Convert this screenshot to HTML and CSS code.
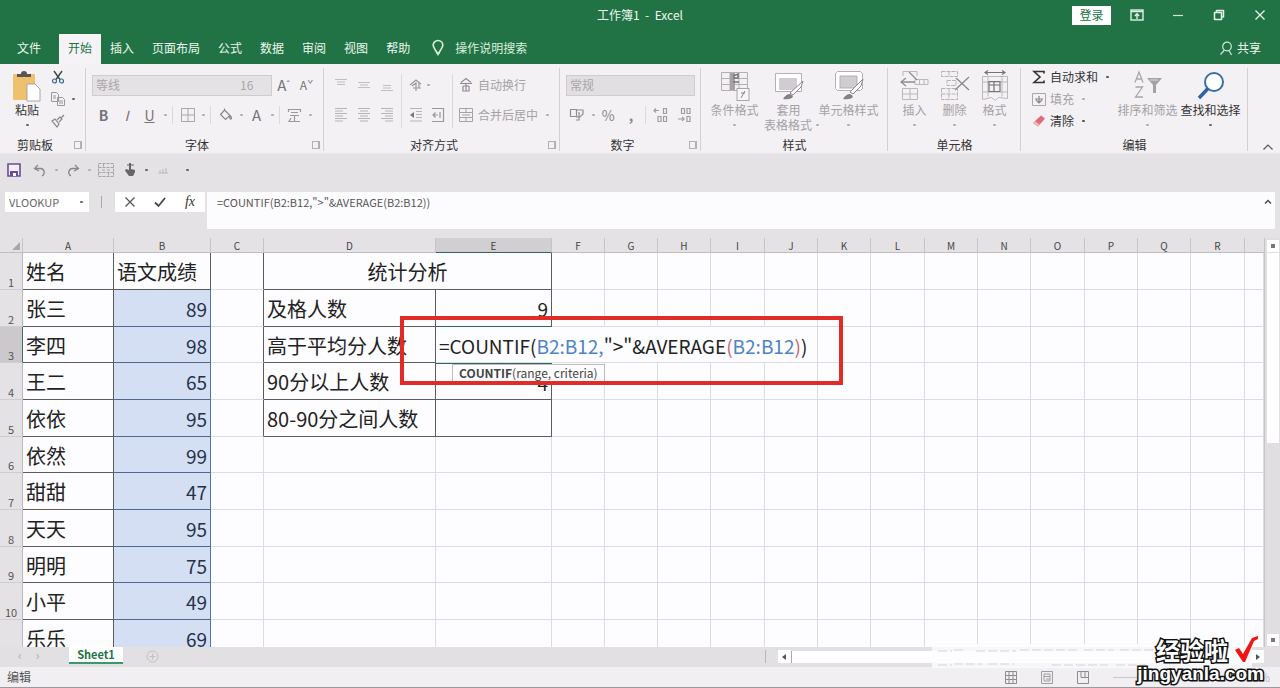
FILE: index.html
```html
<!DOCTYPE html>
<html lang="zh-CN">
<head>
<meta charset="utf-8">
<title>工作簿1 - Excel</title>
<link rel="stylesheet" href="styles.css">
</head>
<body>
<div class="app">
  <header class="top">
    <div class="titlebar">
      <h1 class="title">工作簿1&nbsp; -&nbsp; Excel</h1>
      <div class="window-controls">
        <button class="login">登录</button>
        <button class="win" aria-label="功能区显示选项"><svg width="14" height="12" viewBox="0 0 14 12"><rect x="1" y="1" width="12" height="10" fill="none" stroke="#dff0e4" stroke-width="1.4"/><path d="M1 2.5h12M7 10V5M4.800 7L7 4.800L9.200 7" fill="none" stroke="#dff0e4" stroke-width="1.400"/></svg></button>
        <button class="win" aria-label="最小化"><svg width="12" height="12" viewBox="0 0 12 12"><path d="M1 6.500h10" stroke="#cfe6d6" stroke-width="1.200"/></svg></button>
        <button class="win" aria-label="还原"><svg width="12" height="12" viewBox="0 0 12 12"><path d="M3.500 3.500V1.500h7v6.500h-2M1.500 3.500h7v7h-7z" fill="none" stroke="#e4f3e8" stroke-width="1.500" stroke-linejoin="round"/></svg></button>
        <button class="win" aria-label="关闭"><svg width="12" height="12" viewBox="0 0 12 12"><path d="M1.500 1.500l9 9M10.500 1.500l-9 9" stroke="#eef7f0" stroke-width="1.300"/></svg></button>
      </div>
    </div>
    <nav class="tabs">
      <button class="tab file">文件</button>
      <button class="tab active">开始</button>
      <button class="tab">插入</button>
      <button class="tab">页面布局</button>
      <button class="tab">公式</button>
      <button class="tab">数据</button>
      <button class="tab">审阅</button>
      <button class="tab">视图</button>
      <button class="tab">帮助</button>
      <button class="tell"><svg width="14" height="18" viewBox="0 0 14 18"><path d="M7 1.500a4.800 4.800 0 0 1 4.800 4.800c0 2-1.600 3.700-2.500 5.200L7 15.500l-2.300-4C3.800 10 2.200 8.300 2.200 6.300A4.800 4.800 0 0 1 7 1.500z" fill="none" stroke="#dcefdf" stroke-width="1.600"/><path d="M5.500 14h3" stroke="#dcefdf" stroke-width="1.500"/></svg>操作说明搜索</button>
      <button class="share"><svg width="14" height="15" viewBox="0 0 14 15"><circle cx="8" cy="5.500" r="4.300" fill="none" stroke="#cfe6d6" stroke-width="1.200"/><path d="M5.500 9L1.500 13.500M10 9.500l2.500 4.500" stroke="#cfe6d6" stroke-width="1.200"/></svg>共享</button>
    </nav>
  </header>

  <section class="ribbon">
    <div class="group g-clip">
      <div class="body">
        <button class="big paste">
          <svg width="30" height="32" viewBox="0 0 30 32"><rect x="1" y="4" width="22" height="26" rx="1" fill="#efc06e"/><path d="M5 7V4h4a3 3 0 0 1 6 0h4v3z" fill="#5b5552"/><path d="M15 14h8l5 5v12H15z" fill="#fff" stroke="#aaa5a5"/></svg>
          <span>粘贴</span><i class="dot"></i>
        </button>
        <div class="stack">
          <button class="ico" aria-label="剪切"><svg width="14" height="14" viewBox="0 0 14 14"><path d="M3 1l6 8.500M11 1L5 9.500" stroke="#444" stroke-width="1.400"/><circle cx="3.500" cy="11" r="2" fill="none" stroke="#356a94" stroke-width="1.200"/><circle cx="10.500" cy="11" r="2" fill="none" stroke="#356a94" stroke-width="1.200"/></svg></button>
          <button class="ico copy" aria-label="复制"><svg width="16" height="16" viewBox="0 0 16 16"><path d="M1.500 1.500h5l2 2v7h-7zM7.500 6.500h5l2 2v6h-7zM3 5h3M3 7h3M9 10h4M9 12h4" fill="none" stroke="#9b979b"/></svg><i class="dot"></i></button>
          <button class="ico" aria-label="格式刷"><svg width="14" height="14" viewBox="0 0 14 14"><path d="M1 7l3-2 4 5-2 3zM6 6l3-3 2 2-3 3M10 4l3-3" fill="none" stroke="#8b878b" stroke-width="1.200"/></svg></button>
        </div>
      </div>
      <div class="caption"><span>剪贴板</span><button class="launch" aria-label="剪贴板选项"></button></div>
    </div>

    <div class="group g-font">
      <div class="body col">
        <div class="row">
          <div class="combo"><select class="face" aria-label="字体" disabled><option>等线</option></select><select class="size" aria-label="字号" disabled><option>16</option></select></div>
          <button class="ico w23 letter" aria-label="增大字号">A<sup>ˆ</sup></button>
          <button class="ico w23 letter small" aria-label="减小字号">A<sup>ˇ</sup></button>
        </div>
        <div class="row marks">
          <button class="ico w23"><b>B</b></button>
          <button class="ico w23"><em>I</em></button>
          <button class="ico w23"><u>U</u></button><i class="dot"></i>
          <i class="sep"></i>
          <button class="ico w23" aria-label="边框"><svg width="16" height="16" viewBox="0 0 16 16"><path d="M1.500 1.500h13v13h-13zM8 1.500v13M1.500 8h13" fill="none" stroke="#aaa6aa"/></svg></button><i class="dot"></i>
          <i class="sep"></i>
          <button class="ico w23" aria-label="填充颜色"><svg width="14" height="14" viewBox="0 0 14 14"><path d="M5.500 2l5.500 5.500-4.500 4-5-5zM5.500 2V.5M11 7.500c1.500 1.500 2 3 1 3.500s-1.500-1-1-3.500" fill="none" stroke="#8b878b" stroke-width="1.200"/></svg></button><i class="dot"></i>
          <button class="ico w23 letter" aria-label="字体颜色">A</button><i class="dot"></i>
          <i class="sep"></i>
          <button class="ico w23" aria-label="拼音指南"><svg width="15" height="15" viewBox="0 0 15 15"><path d="M1.500 4V1.500h12V4M4 4.500h7M3 7.500h9M7.500 7.500V13M4 10l-2 3.500h11" fill="none" stroke="#9b979b" stroke-width="1.200"/></svg></button><i class="dot"></i>
        </div>
      </div>
      <div class="caption"><span>字体</span><button class="launch" aria-label="字体选项"></button></div>
    </div>

    <div class="group g-align">
      <div class="body">
        <div class="pad3">
          <button class="ico" aria-label="顶端对齐"><svg width="14" height="14" viewBox="0 0 14 14"><path d="M1 1.500h12M3 4h8M3 6.500h8" stroke="#c2bec2" stroke-width="1.200"/></svg></button>
          <button class="ico" aria-label="垂直居中"><svg width="14" height="14" viewBox="0 0 14 14"><path d="M1 4.500h12M3 7h8M1 9.500h12" stroke="#c2bec2" stroke-width="1.200"/></svg></button>
          <button class="ico" aria-label="底端对齐"><svg width="14" height="14" viewBox="0 0 14 14"><path d="M3 7.500h8M3 10h8M1 12.500h12" stroke="#c2bec2" stroke-width="1.200"/></svg></button>
          <button class="ico" aria-label="左对齐"><svg width="14" height="16" viewBox="0 0 14 16"><path d="M1 1.500h12M1 4h8M1 6.500h12M1 9h8M1 11.500h12M1 14h8" stroke="#b7b3b7" stroke-width="1.200"/></svg></button>
          <button class="ico" aria-label="居中"><svg width="14" height="16" viewBox="0 0 14 16"><path d="M1 1.500h12M3 4h8M1 6.500h12M3 9h8M1 11.500h12M3 14h8" stroke="#b7b3b7" stroke-width="1.200"/></svg></button>
          <button class="ico" aria-label="右对齐"><svg width="14" height="16" viewBox="0 0 14 16"><path d="M1 1.500h12M5 4h8M1 6.500h12M5 9h8M1 11.500h12M5 14h8" stroke="#b7b3b7" stroke-width="1.200"/></svg></button>
        </div>
        <i class="sep tall"></i>
        <div class="pad2">
          <button class="ico" aria-label="方向"><svg width="14" height="14" viewBox="0 0 14 14"><path d="M1 7l6-5 5 4M3 8l4-3v8M10 4v6M4 10h8" fill="none" stroke="#9b979b" stroke-width="1.200"/></svg></button><i class="dot"></i>
          <button class="ico" aria-label="减少缩进量"><svg width="14" height="16" viewBox="0 0 14 16"><path d="M1 1.500h12M7 4.500h6M7 7.500h6M7 10.500h6M1 14h12" stroke="#b7b3b7" stroke-width="1.200"/><path d="M5 5v6L1 8z" fill="#777"/></svg></button>
          <button class="ico" aria-label="增加缩进量"><svg width="14" height="16" viewBox="0 0 14 16"><path d="M1 1.500h11.500v13H1M7 8h-5M4.500 5.500L2 8l2.500 2.500M9 5v6" fill="none" stroke="#9b979b" stroke-width="1.200"/></svg></button>
        </div>
        <i class="sep tall"></i>
        <div class="texts">
          <button class="txt off"><svg width="16" height="16" viewBox="0 0 16 16"><path d="M3 5.500L8 1.500l5 4M2 6.500h12M5 9h6M8 6.500V14M5 9v5h6V9" fill="none" stroke="#918d91" stroke-width="1.200"/></svg>自动换行</button>
          <button class="txt off"><svg width="16" height="16" viewBox="0 0 16 16"><path d="M1.500 1.500h13v4h-13zM1.500 10.500h13v4h-13zM1.500 5.500v5M14.500 5.500v5M8 1.500v4M8 10.500v4M4 8h8" fill="none" stroke="#a5a1a5"/></svg>合并后居中<i class="dot"></i></button>
        </div>
      </div>
      <div class="caption"><span>对齐方式</span><button class="launch" aria-label="对齐选项"></button></div>
    </div>

    <div class="group g-num">
      <div class="body col">
        <div class="row"><select class="format" aria-label="数字格式" disabled><option>常规</option></select></div>
        <div class="row">
          <button class="ico w23" aria-label="会计数字格式"><svg width="16" height="14" viewBox="0 0 16 14"><path d="M1.500 1.500h6v7h-6zM8 2h6v4l-3 3H7M10 4v8H7" fill="none" stroke="#918d91" stroke-width="1.200"/></svg></button><i class="dot"></i>
          <button class="ico w23">%</button>
          <button class="ico w23"><b>,</b></button>
          <i class="sep"></i>
          <button class="ico w23" aria-label="增加小数位数"><svg width="16" height="16" viewBox="0 0 16 16"><path d="M6 3.500H1M3 1.500L1 3.500l2 2M10.500 1.500h3v5h-3zM5 9.500h3v5H5zM10.500 9.500h3v5h-3z" fill="none" stroke="#a09ca0" stroke-width="1.200"/></svg></button>
          <button class="ico w23" aria-label="减少小数位数"><svg width="16" height="16" viewBox="0 0 16 16"><path d="M5.500 1.500h3v5h-3zM11 1.500h3v5h-3zM2 12h6M6 10l2 2-2 2M11 9.500h3v5h-3z" fill="none" stroke="#a09ca0" stroke-width="1.200"/></svg></button>
        </div>
      </div>
      <div class="caption"><span>数字</span><button class="launch" aria-label="数字选项"></button></div>
    </div>

    <div class="group g-style">
      <div class="body center">
        <button class="big off first"><svg width="30" height="32" viewBox="0 0 30 32"><path d="M1.500 2.500h26v18h-26zM1.500 8.500h26M1.500 14.500h26M10 2.500v18M19 2.500v18" fill="none" stroke="#b3afb3"/><path d="M10 3h5v17h-5z" fill="#a5a1a5"/><path d="M13 6l5-2v4h-5M13 12h6" stroke="#77737a" stroke-width="1.500" fill="none"/><rect x="17" y="18.500" width="12" height="12" fill="#f7f5f7" stroke="#aaa6aa"/><path d="M25 21l-4 7M21 23h4" stroke="#8b878b"/></svg><span>条件格式</span><i class="dot"></i></button>
        <button class="big off"><svg width="30" height="32" viewBox="0 0 30 32"><path d="M1.500 3.500h26v18h-26z" fill="#fff" stroke="#b3afb3"/><path d="M5 8h18v12H5z" fill="#d1ccd2"/><path d="M29 11l-2 6-8 8-3-2z" fill="#fff" stroke="#8b878b"/><path d="M9 29q3-5 7-5l3 2q-1 4-10 3z" fill="#85818a"/></svg><span>套用</span><span class="menu">表格格式<i class="dot"></i></span></button>
        <button class="big off"><svg width="30" height="32" viewBox="0 0 30 32"><path d="M3.500 1.500h23l2 2v15l-2 2h-23l-2-2v-15z" fill="#fff" stroke="#b3afb3"/><path d="M6 6h17v12H6z" fill="#d1ccd2" stroke="#b3afb3"/><path d="M29 9l-2 7-8 8-3-2z" fill="#fff" stroke="#8b878b"/><path d="M9 29q3-5 7-5l3 2q-1 4-10 3z" fill="#85818a"/></svg><span>单元格样式</span><i class="dot"></i></button>
      </div>
      <div class="caption"><span>样式</span></div>
    </div>

    <div class="group g-cells">
      <div class="body center">
        <button class="big off"><svg width="30" height="32" viewBox="0 0 30 32"><path d="M3 6V1.500h14V6M2.500 18.500h15v11h-15zM10 18.500v11M2.500 24h15M15 9.500h13v5H15zM19.500 9.500v5M24 9.500v5" fill="none" stroke="#bbb7bb"/><path d="M1 12h14M6 8l-5 4 5 4M9 2l8 8" fill="none" stroke="#918d91" stroke-width="1.300"/></svg><span>插入</span><i class="dot"></i></button>
        <button class="big off"><svg width="30" height="32" viewBox="0 0 30 32"><path d="M1.500 1.500h16v5h-16zM9 1.500v5M1.500 18.500h16v11h-16zM9 18.500v11M1.500 24h16M7 10.500h9v5H7z" fill="none" stroke="#b7b3b7" stroke-dasharray="4 1"/><path d="M16 8l13 12M29 7L15 20" fill="none" stroke="#8b878b" stroke-width="1.300"/></svg><span>删除</span><i class="dot"></i></button>
        <button class="big off"><svg width="30" height="32" viewBox="0 0 30 32"><path d="M2.500 6.500h25v22l-9-1-3 3-4-3-9 2zM8 6.500v20M22 6.500v20M2.500 12h25M2.500 22h25" fill="none" stroke="#bbb7bb"/><path d="M9 11.500h11v10H9zM9 15h11M14 11v10M5 2.500h20M8 .5l-3 2 3 2M22 .5l3 2-3 2" fill="none" stroke="#77737a" stroke-width="1.200"/></svg><span>格式</span><i class="dot"></i></button>
      </div>
      <div class="caption"><span>单元格</span></div>
    </div>

    <div class="group g-edit">
      <div class="body">
        <div class="texts three">
          <button class="txt"><svg width="14" height="14" viewBox="0 0 14 14"><path d="M12 3.500V1.500H2L8 7l-6 5.500h10v-2" fill="none" stroke="#333" stroke-width="1.600"/></svg>自动求和<i class="dot"></i></button>
          <button class="txt off"><svg width="14" height="14" viewBox="0 0 14 14"><path d="M.5 1.500h13v12H.5z" fill="none" stroke="#aaa6aa"/><path d="M7 4v7M4 8l3 3 3-3M3 7h8" fill="none" stroke="#8b878b" stroke-width="1.200"/></svg>填充<i class="dot"></i></button>
          <button class="txt"><svg width="14" height="14" viewBox="0 0 14 14"><path d="M9 1.500l4 3-7 8-5-3.500z" fill="#e0697a"/><path d="M1 9l5 3.500 1.500-2L3 7z" fill="#f3b2bb"/></svg>清除<i class="dot"></i></button>
        </div>
        <button class="big off"><svg width="30" height="32" viewBox="0 0 30 32"><path d="M2 12.500L6 2l4 10.500M3.500 9h5M2.500 17h7l-7 10h7.500" fill="none" stroke="#aaa6aa" stroke-width="1.300"/><path d="M14 8h15l-6 7v8h-3v-8z" fill="#a5a1a5"/><path d="M17 10h8" stroke="#dedade"/></svg><span>排序和筛选</span><i class="dot"></i></button>
        <button class="big"><svg width="30" height="32" viewBox="0 0 30 32"><circle cx="18" cy="12" r="9" fill="#fff" stroke="#3a6ea6" stroke-width="2"/><path d="M12 18.500L3 28" stroke="#2d62a8" stroke-width="3.500"/></svg><span>查找和选择</span><i class="dot"></i></button>
      </div>
      <div class="caption"><span>编辑</span></div>
    </div>
    <button class="collapse" aria-label="折叠功能区"><svg width="12" height="8" viewBox="0 0 12 8"><path d="M1.500 6.500L6 2l4.500 4.500" fill="none" stroke="#555" stroke-width="1.200"/></svg></button>
  </section>

  <div class="quick">
    <button class="q" aria-label="保存"><svg width="14" height="14" viewBox="0 0 14 14"><path d="M1 1h12v12H1z" fill="#f4effa" stroke="#6a4c9c" stroke-width="1.600"/><path d="M3 8h8v5H3z" fill="#6a4c9c"/><path d="M6 10h3v3H6z" fill="#fff"/></svg></button>
    <button class="q" aria-label="撤消"><svg width="14" height="13" viewBox="0 0 14 13"><path d="M5 1L1.500 4.500L6 7M1.500 4.500H8a4 4 0 0 1 1 7.500" fill="none" stroke="#8b878b" stroke-width="1.300"/></svg></button><i class="dot"></i>
    <button class="q" aria-label="恢复"><svg width="14" height="13" viewBox="0 0 14 13"><path d="M9 1l3.500 3.500L8 7M12.500 4.500H6a4 4 0 0 0-1 7.500" fill="none" stroke="#8b878b" stroke-width="1.300"/></svg></button><i class="dot"></i>
    <button class="q" aria-label="表格"><svg width="16" height="16" viewBox="0 0 16 16"><path d="M.5 1.500h15v13H.5zM.5 5.500h15M.5 10.500h15M5.500 1.500v4M10.500 10.500v4M4 8h3M9 8h3" fill="none" stroke="#a7a3a7" stroke-dasharray="3 1"/></svg></button>
    <button class="q" aria-label="触摸模式"><svg width="12" height="16" viewBox="0 0 12 16"><path d="M5 1v7L2 7l-1 1.500L5 14h4l2-4V8L7 7V1z" fill="#666"/><path d="M3 3h7" stroke="#666"/></svg></button><i class="dot dark"></i>
    <button class="q" aria-label="图表"><svg width="12" height="8" viewBox="0 0 12 8"><path d="M1 7h10M2 5h2M6 3v4M9 2v5" stroke="#b9b5b9"/></svg></button>
    <button class="q" aria-label="自定义快速访问工具栏"><i class="dot dark"></i></button>
  </div>

  <div class="formula-bar">
    <div class="name-box"><input aria-label="名称框" value="VLOOKUP"><i class="dot dark"></i></div>
    <span class="grip"></span>
    <div class="fx">
      <button aria-label="取消"><svg width="12" height="12" viewBox="0 0 12 12"><path d="M1.500 1.500l9 9M10.500 1.500l-9 9" stroke="#555" stroke-width="1.300"/></svg></button>
      <button aria-label="输入"><svg width="12" height="12" viewBox="0 0 12 12"><path d="M1 6.500l3.500 3.500L11 2" fill="none" stroke="#444" stroke-width="1.800"/></svg></button>
      <button class="fn">fx</button>
    </div>
    <div class="formula"><textarea aria-label="编辑栏" rows="1">=COUNTIF(B2:B12,">"&amp;AVERAGE(B2:B12))</textarea><svg width="8" height="6" viewBox="0 0 8 6"><path d="M1 4.500L4 1.500l3 3" fill="none" stroke="#444" stroke-width="1.400"/></svg></div>
  </div>

  <main class="work">
    <div class="sheet">
      <table class="grid">
        <colgroup><col class="c-head"><col class="c-a"><col class="c-b"><col class="c-c"><col class="c-d"><col class="c-e"><col class="n"><col class="n"><col class="n"><col class="w"><col class="n"><col class="n"><col class="w"><col class="n"><col class="n"><col class="w"><col class="n"><col class="n"><col class="w"><col></colgroup>
        <thead><tr><th class="corner"><svg width="8" height="8" viewBox="0 0 8 8"><path d="M8 0v8H0z" fill="#a9a7ab"/></svg></th><th>A</th><th>B</th><th>C</th><th>D</th><th class="on">E</th><th>F</th><th>G</th><th>H</th><th>I</th><th>J</th><th>K</th><th>L</th><th>M</th><th>N</th><th>O</th><th>P</th><th>Q</th><th>R</th><th class="last"></th></tr></thead>
        <tbody>
          <tr><th>1</th><td class="k">姓名</td><td class="k">语文成绩</td><td class="l"></td><td class="k mid" colspan="2">统计分析</td><td><td><td><td><td><td><td><td><td><td><td><td><td><td></tr>
          <tr><th>2</th><td class="k">张三</td><td class="s">89</td><td class="l"></td><td class="k">及格人数</td><td class="k num act">9</td><td><td><td><td><td><td><td><td><td><td><td><td><td><td></tr>
          <tr><th class="on">3</th><td class="k">李四</td><td class="s">98</td><td class="l"></td><td class="k">高于平均分人数</td><td class="edit" colspan="6"><div class="editor" contenteditable="true" spellcheck="false">=COUNTIF(<span class="ref">B2:B12,</span>">"&amp;AVERAGE<span class="par">(</span><span class="ref">B2:B12</span><span class="par">)</span>)</div><div class="hint"><b>COUNTIF</b>(range, criteria)</div></td><td><td><td><td><td><td><td><td><td></tr>
          <tr><th>4</th><td class="k">王二</td><td class="s">65</td><td class="l"></td><td class="k">90分以上人数</td><td class="k num under">4</td><td><td><td><td><td><td><td><td><td><td><td><td><td><td></tr>
          <tr><th>5</th><td class="k">依依</td><td class="s">95</td><td class="l"></td><td class="k">80-90分之间人数</td><td class="k"></td><td><td><td><td><td><td><td><td><td><td><td><td><td><td></tr>
          <tr><th>6</th><td class="k">依然</td><td class="s">99</td><td><td><td><td><td><td><td><td><td><td><td><td><td><td><td><td><td></tr>
          <tr><th>7</th><td class="k">甜甜</td><td class="s">47</td><td><td><td><td><td><td><td><td><td><td><td><td><td><td><td><td><td></tr>
          <tr><th>8</th><td class="k">天天</td><td class="s">95</td><td><td><td><td><td><td><td><td><td><td><td><td><td><td><td><td><td></tr>
          <tr><th>9</th><td class="k">明明</td><td class="s">75</td><td><td><td><td><td><td><td><td><td><td><td><td><td><td><td><td><td></tr>
          <tr><th>10</th><td class="k">小平</td><td class="s">49</td><td><td><td><td><td><td><td><td><td><td><td><td><td><td><td><td><td></tr>
          <tr><th></th><td class="k">乐乐</td><td class="s">69</td><td><td><td><td><td><td><td><td><td><td><td><td><td><td><td><td><td></tr>
        </tbody>
      </table>
      <div class="callout"></div>
    </div>
    <div class="vscroll">
      <button aria-label="向上滚动"></button>
      <div class="track"><div class="thumb"></div></div>
      <button aria-label="向下滚动"></button>
    </div>
  </main>

  <div class="sheetbar">
    <div class="arrows"><button aria-label="上一张">‹</button><button aria-label="下一张">›</button></div>
    <button class="sheet-tab">Sheet1</button>
    <button class="add" aria-label="新工作表"><svg width="13" height="13" viewBox="0 0 13 13"><circle cx="6.500" cy="6.500" r="5.500" fill="none" stroke="#c4c1c5"/><path d="M6.500 3.500v6M3.500 6.500h6" stroke="#c4c1c5"/></svg></button>
    <div class="hscroll">
      <button aria-label="向左滚动"><svg width="6" height="6" viewBox="0 0 6 6"><path d="M5 0v6L1 3z" fill="#555"/></svg></button><div class="hthumb"></div><button aria-label="向右滚动"><svg width="6" height="6" viewBox="0 0 6 6"><path d="M1 0v6l4-3z" fill="#555"/></svg></button>
    </div>
  </div>

  <footer class="status">
    <span>编辑</span>
    <div class="views">
      <button aria-label="普通"><svg width="12" height="13" viewBox="0 0 12 13"><path d="M.5.5h11v12H.5zM4 .5v12M8 .5v12M.5 4.500h11M.5 8.500h11" fill="none" stroke="#8f8b90"/></svg></button>
      <button aria-label="页面布局"><svg width="12" height="13" viewBox="0 0 12 13"><path d="M.5.5h11v12H.5zM3 3h6v7H3zM3 5.500h6M5 8h4" fill="none" stroke="#a19da2"/></svg></button>
      <button aria-label="分页预览"><svg width="12" height="13" viewBox="0 0 12 13"><path d="M.5.5h11v12H.5zM4 .5v6h7.500M8 .5v6" fill="none" stroke="#8f8b90"/></svg></button>
      <span class="zoomline"></span>
      <span class="pct">100%</span>
    </div>
  </footer>

  <div class="haze"><svg width="100%" height="24" viewBox="0 0 320 24" preserveAspectRatio="none"><path d="M6 7h14M22 6h12M44 7h40M88 6h60M152 6h30M188 6h52M6 21h14M22 20h28M56 20h26M120 21h56M184 21h30" stroke="#d6d3d7" stroke-dasharray="9 3"/></svg></div>
  <div class="mark"><div class="cn">经验啦<svg width="26" height="28" viewBox="0 0 26 28"><path d="M1 14l4-2 4 6L18 2l6-2v3l-4 2-9 21H9z" fill="#f01414"/></svg></div><div class="en">jingyanla.com</div></div>
</div>
</body>
</html>
```
FILE: styles.css
```css
* { box-sizing: border-box; }
body { margin: 0; font-family: "Noto Sans CJK SC", "Liberation Sans", sans-serif; font-size: 12px; line-height: 16px; color: #333; }
button, input, select, textarea { font: inherit; color: inherit; border: 0; padding: 0; margin: 0; background: none; }
i, em { font-style: normal; }
svg { display: block; flex: none; }
.app { position: relative; display: flex; flex-direction: column; height: 100vh; overflow: hidden; background: #e4e2e5; }

.top { background: #217346; color: #eef7f0; }
.titlebar { display: grid; grid-template-columns: 1fr auto 1fr; align-items: center; height: 30px; }
.title { grid-column: 2; margin: 0; font-size: 12px; font-weight: 400; }
.window-controls { display: flex; justify-content: flex-end; align-items: center; }
.login { background: #fff; color: #217346; width: 39px; height: 19px; margin-right: 5px; }
.win { width: 41px; height: 28px; display: flex; align-items: center; justify-content: center; }
.tabs { display: flex; height: 34px; padding: 4px 10px 0 8px; }
.tab { padding: 0 9px 2px; }
.file { margin-right: 9px; }
.active { background: #f5f3f5; color: #217346; }
.tell { display: flex; align-items: center; gap: 10px; margin-left: 12px; padding-bottom: 2px; color: #dcefdf; }
.share { display: flex; align-items: center; gap: 4px; margin-left: auto; padding: 0 9px 2px; }

.ribbon { display: flex; height: 90px; background: #f3f1f3; border-bottom: 1px solid #e9e7ea; }
.group { position: relative; display: flex; flex-direction: column; flex: none; padding: 2px 0 0; }
.group::after { content: ""; position: absolute; right: 0; top: 4px; bottom: 2px; width: 1px; background: #d3d0d4; }
.g-clip { width: 86px; }
.g-font { width: 238px; }
.g-align { width: 236px; }
.g-num { width: 141px; }
.g-style { width: 187px; }
.g-cells { width: 133px; }
.g-edit { width: 227px; }
.body { flex: 1; display: flex; min-height: 0; }
.body.col { flex-direction: column; padding: 8px 6px 0; gap: 8px; }
.body.center { justify-content: center; }
.caption { display: flex; height: 16px; }
.caption span { flex: 1; text-align: center; color: #333; }
.launch { width: 8px; height: 8px; margin: 4px 4px 0; border: 1px solid #b3afb3; border-right-width: 2px; }
.row { display: flex; align-items: center; height: 22px; }
.dot { display: inline-block; flex: none; width: 3px; height: 2px; border-radius: 1px; background: #b1adb1; }
.dot.dark { background: #666; }
.row .dot { margin: 0 2px 0 3px; }
.sep { flex: none; width: 1px; height: 18px; margin: 0 3px; background: #dddadd; }
.sep.tall { height: 54px; }
.ico { display: flex; align-items: center; justify-content: center; color: #8b878b; font-size: 14px; }
.w23 { width: 23px; height: 22px; }
.marks .ico { color: #77737a; }
.marks em { font-style: italic; }
.letter { font-size: 15px; color: #77737a; }
.letter.small { font-size: 12px; }
.letter sup { font-size: 10px; }

.big { display: flex; flex-direction: column; align-items: center; width: 40px; line-height: 15px; padding-top: 4px; }
.big span { white-space: nowrap; }
.big > .dot { margin-top: 7px; }
.big .dot { background: #666; }
.menu { display: flex; align-items: center; gap: 4px; margin-left: 6px; }
.off { color: #a5a1a5; }
.big.off .dot { background: #b1adb1; }
.paste { width: 36px; margin-left: 9px; }
.stack { display: flex; flex-direction: column; justify-content: space-between; padding: 4px 0 9px 5px; }
.copy { position: relative; }
.copy .dot { position: absolute; left: 22px; background: #666; }
.combo { display: flex; width: 180px; height: 21px; border: 1px solid #cfccd0; background: #e4e2e5; }
.combo select, .format { appearance: none; opacity: 1; color: #aaa6aa; padding-left: 3px; }
.face { flex: 1; }
.size { width: 34px; }
.format { width: 100%; height: 21px; border: 1px solid #cfccd0; background: #e1dfe2; }

.g-align .body { padding: 8px 5px 0; }
.pad3 { display: grid; grid-template-columns: repeat(3, 23px); grid-auto-rows: 22px; row-gap: 8px; }
.pad2 { display: grid; grid-template-columns: 22px 22px; grid-auto-rows: 22px; row-gap: 8px; align-items: center; }
.texts { display: flex; flex-direction: column; gap: 8px; padding-left: 2px; }
.txt { display: flex; align-items: center; gap: 4px; height: 22px; white-space: nowrap; }
.txt .dot { margin-left: 4px; }
.three { gap: 0; padding: 0; width: 84px; }
.txt:not(.off) .dot { background: #555; }
.g-style .big { width: 60px; }
.g-style .first { width: 48px; }
.g-edit .body { padding-left: 11px; }
.g-edit .big { width: 63px; }
.collapse { margin: auto 6px 2px auto; }

.quick { display: flex; align-items: center; height: 32px; padding-left: 5px; }
.q { display: flex; align-items: center; justify-content: center; width: 24px; height: 24px; }
.quick > .dot { margin: 0 3px; }
.quick .q:first-child { width: 18px; margin-right: 5px; }

.formula-bar { display: flex; align-items: flex-start; padding: 6px 5px 9px; font-size: 11px; }
.name-box { display: flex; align-items: center; width: 84px; height: 20px; padding: 0 6px 0 4px; background: #fff; color: #666; }
.name-box input { flex: 1; min-width: 0; }
.grip { width: 1px; height: 12px; margin: 4px 13px 0 12px; background: #aaa6aa; }
.fx { display: flex; width: 90px; height: 20px; background: #fff; }
.fx button { flex: 1; display: flex; align-items: center; justify-content: center; }
.fn { font-family: "Liberation Serif", serif; font-style: italic; font-size: 14px; }
.formula { flex: 1; display: flex; height: 37px; margin-left: 2px; padding: 2px 3px 0 10px; background: #fcfbfd; color: #555; }
.formula textarea { flex: 1; resize: none; }
.formula svg { margin-top: 5px; }

.work { flex: 1; display: flex; min-height: 0; }
.sheet { position: relative; flex: 1; min-width: 0; overflow: hidden; background: #fdfcfe; }
.grid { width: 100%; table-layout: fixed; border-collapse: separate; border-spacing: 0; }
.c-head { width: 23px; }
.c-a { width: 91px; }
.c-b { width: 97px; }
.c-c { width: 53px; }
.c-d { width: 172px; }
.c-e { width: 116px; }
.n { width: 53px; }
.w { width: 54px; }
thead th { height: 15px; padding: 1px 0 0; font-size: 10px; font-weight: 400; line-height: 13px; background: #e4e2e5; border-right: 1px solid #c6c4c8; border-bottom: 1px solid #bfbdc1; color: #444; }
thead .on { background: #d1cfd2; border-bottom: 1px solid #2d6a51; }
thead .last { border-right: 0; }
.corner svg { margin-left: 12px; }
tbody tr { height: 37px; }
tbody tr:nth-child(3n) { height: 36px; }
tbody th { padding: 0; font-size: 11px; line-height: 14px; font-weight: 400; vertical-align: bottom; background: #e4e2e5; border-right: 1px solid #b9b7bb; border-bottom: 1px solid #cfcdd1; color: #555; }
tbody th.on { background: #cbc9cc; border-right-color: #4a6a5c; }
td { padding: 2px 3px 0; font-size: 20px; line-height: 28px; white-space: nowrap; color: #222; border-right: 1px solid #dcdde4; border-bottom: 1px solid #dcdde4; }
.k { border-color: #5c5c60; }
.l { border-right-color: #5c5c60; }
.mid { text-align: center; }
.s { text-align: right; font-size: 19px; background: #d5dff3; color: #26324a; border-right-color: #4d74ac; border-bottom-color: #52698f; }
.num { text-align: right; font-size: 19px; }
.act { border-bottom-color: #2d6a51; }
.under { border-top: 1px solid #2d6a51; }
.edit { position: relative; font-size: 19px; background: #fdfcfe; }
.editor { outline: 0; }
.ref { color: #4f83c7; }
.par { color: #c56a72; }
.hint { position: absolute; left: 16px; top: 37px; padding: 0 6px; font-size: 12px; line-height: 16px; background: #fdfcfe; border: 1px solid #bfbdc1; color: #444; }
.callout { position: absolute; left: 400px; top: 78px; width: 443px; height: 69px; border: 4px solid #e02b27; pointer-events: none; }

.vscroll { display: flex; flex-direction: column; align-items: center; width: 16px; background: #e0dee1; border-left: 1px solid #c6c4c8; }
.vscroll button { width: 12px; height: 12px; margin: 2px 0 1px; background: #777; border: 4px solid #fff; flex: none; }
.track { flex: 1; width: 12px; }
.thumb { height: 50%; background: #fff; }

.sheetbar { display: flex; align-items: flex-start; height: 20px; background: #e2e0e3; }
.arrows { display: flex; width: 69px; padding-left: 18px; gap: 14px; color: #aaa6aa; }
.sheet-tab { width: 54px; height: 17px; font-size: 11px; line-height: 13px; background: #fff; color: #217346; font-weight: 700; border-bottom: 2px solid #3a9a6a; }
.add { margin: 3px 0 0 23px; }
.hscroll { display: flex; align-items: center; width: 39%; margin: 3px 16px 0 auto; padding-left: 12px; height: 13px; border-left: 1px solid #b9b7bb; }
.hscroll button { display: flex; align-items: center; justify-content: center; width: 13px; height: 13px; background: #fff; }
.hthumb { flex: 1; height: 12px; margin-right: 8px; background: #fff; border-left: 1px solid #aaa; }
.status { display: flex; align-items: center; justify-content: space-between; height: 21px; padding: 0 10px 0 7px; background: #f1eff2; border-bottom: 1px solid #9b999d; color: #555; }
.views { display: flex; align-items: center; gap: 24px; }
.zoomline { width: 126px; height: 1px; background: #c9c7cb; }
.pct { margin-left: -24px; color: #c1bfc3; }

.haze { position: absolute; right: 28px; bottom: 20px; width: 320px; height: 24px; background: rgba(253, 252, 254, 0.8); pointer-events: none; }
.mark { position: absolute; right: 16px; bottom: 4px; text-align: right; color: #fff; font-weight: 700; -webkit-text-stroke: 3px #111; paint-order: stroke fill; pointer-events: none; }
.cn { display: flex; justify-content: flex-end; align-items: center; gap: 6px; padding-right: 4px; font-size: 24px; line-height: 26px; }
.en { font-family: "Liberation Sans", sans-serif; font-size: 19px; line-height: 20px; }
```
